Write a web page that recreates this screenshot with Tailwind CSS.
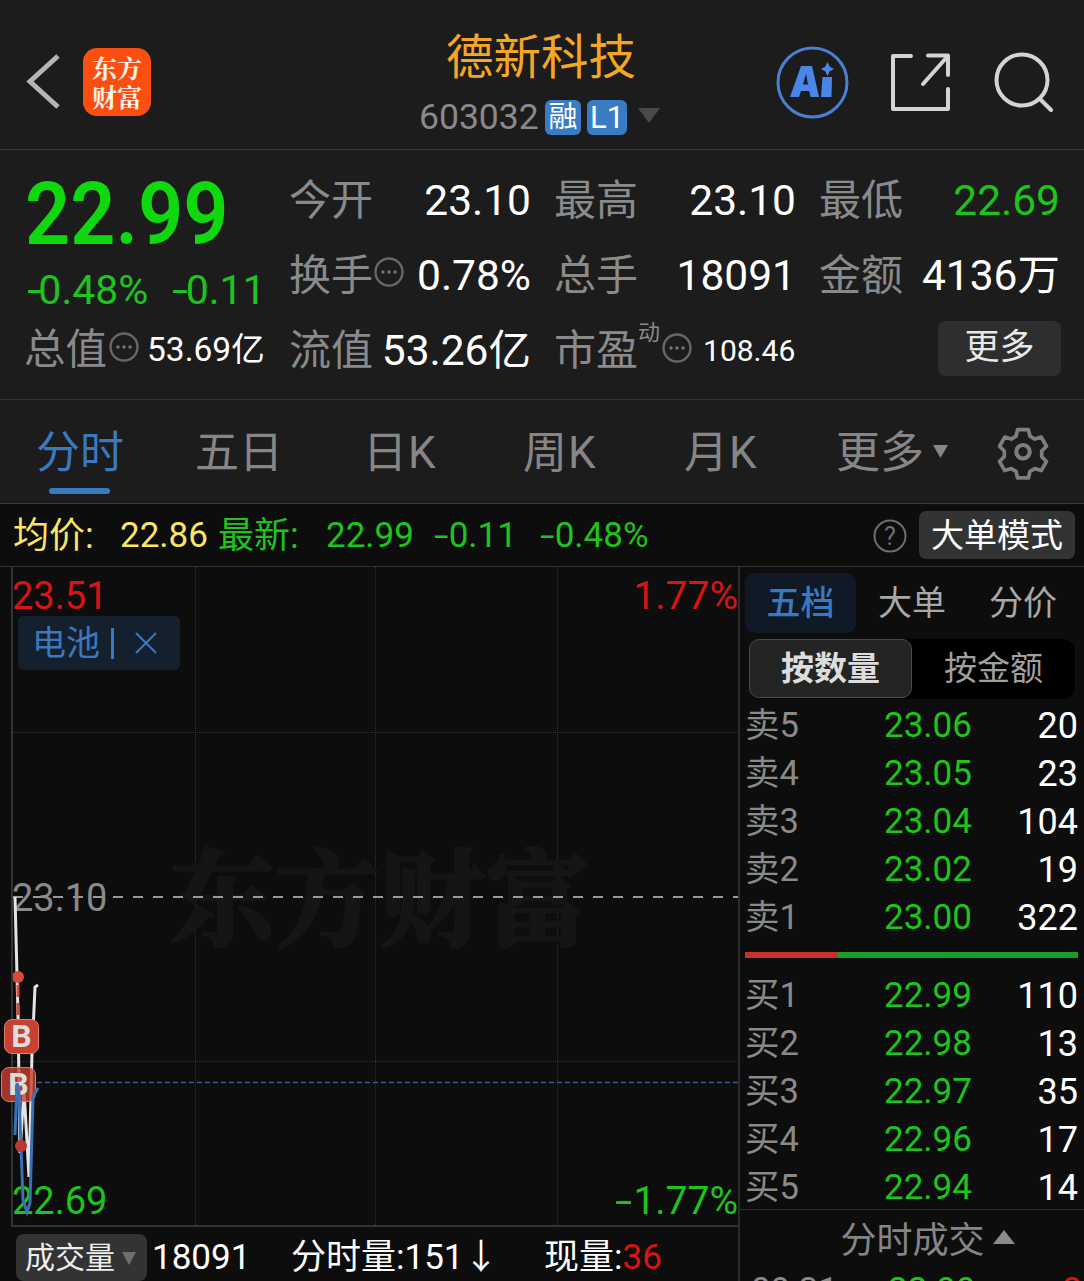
<!DOCTYPE html>
<html lang="zh"><head><meta charset="utf-8">
<script src="https://cdn.jsdelivr.net/npm/@tailwindcss/browser@4"></script>
</head>
<body class="m-0 bg-[#0d0d0d]">
<div class="w-[1084px] h-[1281px] overflow-hidden flex flex-col bg-[#0d0d0d] font-['Roboto','Noto_Sans_CJK_SC',sans-serif] text-white">

<header class="h-[150px] shrink-0 bg-[#1c1c1c] border-b border-[#3a3a3a] relative flex items-center">
  <svg class="ml-[25px] mt-[15px]" width="36" height="56" viewBox="0 0 36 56"><path d="M33 2 L5 27.500 L33 53" fill="none" stroke="#b5b5b5" stroke-width="5"/></svg>
  <div class="ml-[22px] mt-[15px] w-[68px] h-[68px] rounded-[14px] bg-[#fb4f12] flex flex-col items-center justify-center text-[#fff3ea] text-[25px] leading-[29px] font-bold font-['Noto_Serif_CJK_SC','Noto_Sans_CJK_SC',serif]"><span>东方</span><span>财富</span></div>
  <div class="absolute left-[420px] top-[28px] w-[243px] flex flex-col items-center">
    <div class="text-[#f5a623] text-[47.5px] leading-[60px] ml-[-1px]">德新科技</div>
    <div class="flex items-center h-[36px] mt-[11px] self-start">
      <span class="text-[#8a8a8a] text-[35.5px] leading-[36px] w-[125px] -ml-[1px] mr-[1px]">603032</span>
      <span class="w-[36px] h-[35px] rounded-[6px] bg-[#3a7cc4] text-white text-[29px] leading-[35px] text-center">融</span>
      <span class="ml-[6px] w-[40px] h-[35px] rounded-[6px] bg-[#3a7cc4] text-white text-[31px] leading-[35px] text-center">L1</span>
      <svg class="ml-[11px] -mt-[2px]" width="22" height="16" viewBox="0 0 22 16"><path d="M0 0H22L11 15Z" fill="#4a4a4a"/></svg>
    </div>
  </div>
  <svg class="absolute left-[776px] top-[46px]" width="73" height="73" viewBox="0 0 73 73">
    <circle cx="36.500" cy="36.500" r="34.500" fill="none" stroke="#4a80d4" stroke-width="3"/>
    <path d="M14 51 L25 20 H36 L43 51 H34.500 L33.300 45 H25 L23 51Z M27 38.500 H32 L30 27.500Z" fill="#4a86e8" fill-rule="evenodd"/>
    <path d="M46.500 31 H56 L55.500 51 H45Z" fill="#4a86e8"/>
    <path d="M51.500 16 L53.800 20.700 L58 23 L53.800 25.300 L51.500 30 L49.200 25.300 L45 23 L49.200 20.700Z" fill="#4a86e8"/>
  </svg>
  <svg class="absolute left-[890px] top-[52px]" width="62" height="60" viewBox="0 0 62 60" fill="none" stroke="#d4d4d4" stroke-width="4" stroke-linejoin="round" stroke-linecap="round">
    <path d="M21 4 H3 V57 H58 V37"/><path d="M33 32 L57 5"/><path d="M38 3.500 H58 V23"/>
  </svg>
  <svg class="absolute left-[992px] top-[50px]" width="62" height="62" viewBox="0 0 62 62" fill="none" stroke="#d4d4d4" stroke-width="4" stroke-linecap="round">
    <circle cx="30" cy="30" r="25.500"/><path d="M48 49 L59 60"/>
  </svg>
</header>

<section class="h-[250px] shrink-0 bg-[#1c1c1c] border-b border-[#333] relative flex">
  <div class="w-[289px] shrink-0 pl-[25px]">
    <div class="h-[120px] text-[#0fd80f] text-[88px] leading-[128px] font-semibold origin-left scale-x-[.9] whitespace-nowrap">22.99</div>
    <div class="h-[46px] flex text-[#1dc41d] text-[41px] leading-[40px] gap-[24px] pl-[2px]"><span><span class="inline-block origin-left scale-x-[1.4]">-</span>0.48%</span><span><span class="inline-block origin-left scale-x-[1.4] mr-[2px]">-</span>0.11</span></div>
    <div class="h-[68px] flex items-center">
      <span class="text-[#8a8a8a] text-[41.5px] leading-none -ml-[1px]">总值</span>
      <svg class="ml-[2px] -mt-[6px]" width="30" height="30" viewBox="0 0 30 30"><circle cx="15" cy="15" r="13.500" fill="none" stroke="#666" stroke-width="2.400"/><g fill="#777"><circle cx="9" cy="15" r="1.700"/><circle cx="15" cy="15" r="1.700"/><circle cx="21" cy="15" r="1.700"/></g></svg>
      <span class="ml-[8px] text-[33.5px] leading-none whitespace-nowrap">53.69亿</span>
    </div>
  </div>
  <div class="absolute left-[289px] top-[25px] w-[771px] grid grid-cols-[265px_265px_241px] text-[42.5px]">
    <div class="h-[75px] flex justify-between items-start pr-[23px] leading-[52px]"><span class="text-[#8a8a8a] text-[42px]">今开</span><span>23.10</span></div>
    <div class="h-[75px] flex justify-between items-start pr-[23px] leading-[52px]"><span class="text-[#8a8a8a] text-[42px]">最高</span><span>23.10</span></div>
    <div class="h-[75px] flex justify-between items-start leading-[52px]"><span class="text-[#8a8a8a] text-[42px]">最低</span><span class="text-[#1dc41d]">22.69</span></div>

    <div class="h-[75px] flex justify-between items-start pr-[23px] leading-[52px]"><span class="flex items-start text-[#8a8a8a] text-[42px]">换手<svg class="mt-[7px] ml-[1px]" width="30" height="30" viewBox="0 0 30 30"><circle cx="15" cy="15" r="13.500" fill="none" stroke="#666" stroke-width="2.400"/><g fill="#777"><circle cx="9" cy="15" r="1.700"/><circle cx="15" cy="15" r="1.700"/><circle cx="21" cy="15" r="1.700"/></g></svg></span><span>0.78%</span></div>
    <div class="h-[75px] flex justify-between items-start pr-[23px] leading-[52px]"><span class="text-[#8a8a8a] text-[42px]">总手</span><span>18091</span></div>
    <div class="h-[75px] flex justify-between items-start leading-[52px]"><span class="text-[#8a8a8a] text-[42px]">金额</span><span>4136万</span></div>

    <div class="h-[75px] flex justify-between items-start pr-[23px] leading-[52px]"><span class="text-[#8a8a8a] text-[42px]">流值</span><span>53.26亿</span></div>
    <div class="h-[75px] flex items-start leading-[52px]"><span class="text-[#8a8a8a] text-[42px]">市盈</span><span class="text-[#8a8a8a] text-[22px] leading-[22px] -mt-[3px]">动</span><svg class="mt-[8px] ml-[2px]" width="30" height="30" viewBox="0 0 30 30"><circle cx="15" cy="15" r="13.500" fill="none" stroke="#666" stroke-width="2.400"/><g fill="#777"><circle cx="9" cy="15" r="1.700"/><circle cx="15" cy="15" r="1.700"/><circle cx="21" cy="15" r="1.700"/></g></svg><span class="ml-[11px] text-[30px]">108.46</span></div>
    <div class="h-[75px] flex justify-end items-start"><span class="mt-[-4px] mr-[-1px] w-[123px] h-[55px] rounded-[7px] bg-[#2e2e2e] text-[#e8e8e8] text-[35px] leading-[54px] text-center">更多</span></div>
  </div>
</section>

<nav class="h-[104px] shrink-0 bg-[#1c1c1c] border-b border-[#3a3a3a] relative text-[#868686] text-[44px] leading-[52px]">
  <span class="absolute left-[36px] top-[27px] text-[#3a78bf]">分时</span>
  <span class="absolute left-[49px] top-[88px] w-[61px] h-[6px] rounded-full bg-[#3a78bf]"></span>
  <span class="absolute left-[195px] top-[27px]">五日</span>
  <span class="absolute left-[363px] top-[27px] tracking-[1px]">日K</span>
  <span class="absolute left-[523px] top-[27px] tracking-[1px]">周K</span>
  <span class="absolute left-[684px] top-[27px] tracking-[1px]">月K</span>
  <span class="absolute left-[836px] top-[27px]">更多</span>
  <svg class="absolute left-[933px] top-[45px]" width="15" height="13" viewBox="0 0 15 13"><path d="M0 0H15L7.500 13Z" fill="#868686"/></svg>
  <svg class="absolute left-[994px] top-[22px]" width="58" height="58" viewBox="0 0 24 24" fill="none" stroke="#7e7e7e" stroke-width="1.700" stroke-linejoin="round"><path d="M9.500 2.200h5l.7 3 2.200 1.300 3-.9 2.400 4.200-2.200 2.200v2.600l2.200 2.200-2.400 4.200-3-.9-2.200 1.300-.7 3h-5l-.7-3-2.200-1.300-3 .9-2.400-4.200 2.200-2.200v-2.600l-2.200-2.200 2.400-4.200 3 .9 2.200-1.300z" transform="translate(1.200 1.200) scale(.9)"/><circle cx="12" cy="12.300" r="2.800"/></svg>
</nav>

<section class="h-[63px] shrink-0 bg-[#0d0d0d] border-b border-[#333] relative text-[35px] leading-[64px]">
  <span class="absolute left-[13px] top-0 text-[#fbe565] text-[36px]">均价:</span>
  <span class="absolute left-[120px] top-0 text-[#fbe565]">22.86</span>
  <span class="absolute left-[218px] top-0 text-[#1dc41d] text-[36px]">最新:</span>
  <span class="absolute left-[326px] top-0 text-[#1dc41d]">22.99</span>
  <span class="absolute left-[434px] top-0 text-[#1dc41d]"><span class="inline-block origin-left scale-x-[1.5] mr-[5px]">-</span>0.11</span>
  <span class="absolute left-[540px] top-0 text-[#1dc41d]"><span class="inline-block origin-left scale-x-[1.5] mr-[5px]">-</span>0.48%</span>
  <svg class="absolute left-[873px] top-[15px]" width="34" height="34" viewBox="0 0 34 34"><circle cx="17" cy="17" r="15.500" fill="none" stroke="#6e6e6e" stroke-width="2"/><text x="17" y="26" text-anchor="middle" font-size="25" fill="#6e6e6e" font-family="Roboto">?</text></svg>
  <span class="absolute left-[919px] top-[7px] w-[156px] h-[48px] rounded-[7px] bg-[#333] text-[33px] leading-[50px] text-center">大单模式</span>
</section>

<div class="flex-1 flex min-h-0">
  <div class="w-[740px] shrink-0 flex flex-col border-r-2 border-[#2b2b2b]">
    <div class="relative h-[660px] ml-[11px] border-l-2 border-b-2 border-[#333]">
      <!-- grid -->
      <div class="absolute left-[182px] top-0 bottom-0 border-l border-dotted border-[#333]"></div>
      <div class="absolute left-[362px] top-0 bottom-0 border-l border-dotted border-[#333]"></div>
      <div class="absolute left-[544px] top-0 bottom-0 border-l border-dotted border-[#333]"></div>
      <div class="absolute left-0 right-0 top-[165px] border-t border-dotted border-[#333]"></div>
      <div class="absolute left-0 right-0 top-[494px] border-t border-dotted border-[#333]"></div>
      <!-- watermark -->
      <div class="absolute left-[157px] top-[260px] text-[#151515] text-[105px] leading-[130px] font-bold whitespace-nowrap [-webkit-text-stroke:3px_#151515] font-['Noto_Serif_CJK_SC','Noto_Sans_CJK_SC',serif]">东方财富</div>
      <svg class="absolute left-0 top-[328px]" width="725" height="4"><line x1="0" y1="2" x2="725" y2="2" stroke="#9a9a9a" stroke-width="2" stroke-dasharray="10 10"/></svg>
      <svg class="absolute left-0 top-[514px]" width="725" height="3"><line x1="0" y1="1.500" x2="725" y2="1.500" stroke="#2f5f9f" stroke-width="1.500" stroke-dasharray="5 3"/></svg>
      <!-- labels -->
      <span class="absolute left-[-1px] top-[6px] text-[#d81414] text-[38px] leading-[46px]">23.51</span>
      <span class="absolute right-0 top-[6px] text-[#d81414] text-[39px] leading-[46px]">1.77%</span>
      <span class="absolute left-[-1px] top-[308px] text-[#8a8a8a] text-[38px] leading-[46px]">23.10</span>
      <span class="absolute left-[-1px] top-[611px] text-[#1dc41d] text-[38px] leading-[46px]">22.69</span>
      <span class="absolute right-0 top-[611px] text-[#1dc41d] text-[39px] leading-[46px]"><span class="inline-block origin-left scale-x-[1.6] mr-[8px]">-</span>1.77%</span>
      <div class="absolute left-[5px] top-[49px] w-[162px] h-[54px] rounded-[5px] bg-[#14202e] text-[#3a78bf] text-[34px] leading-[44px] flex items-center pl-[14px]">电池<span class="ml-[11px] w-[3px] h-[31px] bg-[#3a78bf]"></span>
        <svg class="ml-[20px]" width="24" height="24" viewBox="0 0 24 24"><path d="M2 2L22 22M22 2L2 22" stroke="#3a78bf" stroke-width="2"/></svg></div>
      <!-- chart -->
      <svg class="absolute left-0 top-0" width="60" height="660" viewBox="0 0 60 660" fill="none">
        <path d="M2 330 L5 448 L7 586 L11 523 L16 610 L19 486 L22 420 L25 418" stroke="#e5e5e5" stroke-width="3"/>
        <path d="M5 418 V448" stroke="#d8493a" stroke-width="3" stroke-dasharray="12 6"/>
        <circle cx="5" cy="410" r="6" fill="#d8493a"/>
      </svg>
      <div class="absolute left-[-9px] top-[452px] w-[35px] h-[35px] rounded-[8px] bg-[#c8402f] border border-[#e07a6c] text-[#ddd] text-[32px] leading-[33px] font-bold text-center">B</div>
      <div class="absolute left-[-12px] top-[500px] w-[35px] h-[35px] rounded-[8px] bg-[#c8402f]/80 border border-[#e07a6c] text-[#ddd] text-[32px] leading-[33px] font-bold text-center">B</div>
      <svg class="absolute left-0 top-0" width="60" height="660" viewBox="0 0 60 660" fill="none">
        <path d="M2 568 L4 516 L6 526 L10 633 L14 645 L17 636 L20 530 L25 521" stroke="#3a70b8" stroke-width="3"/>
        <circle cx="8" cy="579" r="6" fill="#b73a30"/>
      </svg>
    </div>
    <div class="h-[54px] relative text-[35px] leading-[50px]">
      <div class="absolute left-[16px] top-[7px] w-[131px] h-[47px] rounded-[8px] bg-[#333] flex items-center pl-[9px] text-[#eee] text-[30px]">成交量<svg class="ml-[7px] mt-[2px]" width="14" height="13" viewBox="0 0 14 13"><path d="M0 0H14L7 13Z" fill="#6e6e6e"/></svg></div>
      <span class="absolute left-[152px] top-[6px]">18091</span>
      <span class="absolute left-[291px] top-[6px] whitespace-nowrap">分时量:151↓</span>
      <span class="absolute left-[544px] top-[6px] whitespace-nowrap">现量:<span class="text-[#d81414]">36</span></span>
    </div>
  </div>

  <aside class="flex-1 min-w-0 flex flex-col relative text-[34px]">
    <div class="h-[72px] shrink-0 relative text-[#a8a8a8] leading-[46px]">
      <span class="absolute left-[5px] top-[6px] w-[111px] h-[60px] rounded-[10px] bg-[#0f1a26] text-[#3a78bf] font-medium text-center leading-[60px]">五档</span>
      <span class="absolute left-[138px] top-[13px]">大单</span>
      <span class="absolute left-[249px] top-[13px]">分价</span>
    </div>
    <div class="h-[60px] shrink-0 ml-[9px] w-[326px] rounded-[12px] bg-black flex text-[33px]">
      <span class="w-[163px] h-[59px] rounded-[10px] bg-[#242424] border border-[#4a4a4a] text-[#ddd] font-bold text-center leading-[57px]">按数量</span>
      <span class="flex-1 text-[#a0a0a0] text-center leading-[59px]">按金额</span>
    </div>
    <div class="h-[3px] shrink-0"></div>
    <div class="flex flex-col">
      <div class="h-[48px] flex items-center pl-[5px] pr-[6px]"><span class="w-[140px] text-[#8a8a8a] text-[34.5px]">卖5</span><span class="w-[87px] -ml-[1px] text-[#1dc41d] text-[35px]">23.06</span><span class="flex-1 text-right text-[36px]">20</span></div>
      <div class="h-[48px] flex items-center pl-[5px] pr-[6px]"><span class="w-[140px] text-[#8a8a8a] text-[34.5px]">卖4</span><span class="w-[87px] -ml-[1px] text-[#1dc41d] text-[35px]">23.05</span><span class="flex-1 text-right text-[36px]">23</span></div>
      <div class="h-[48px] flex items-center pl-[5px] pr-[6px]"><span class="w-[140px] text-[#8a8a8a] text-[34.5px]">卖3</span><span class="w-[87px] -ml-[1px] text-[#1dc41d] text-[35px]">23.04</span><span class="flex-1 text-right text-[36px]">104</span></div>
      <div class="h-[48px] flex items-center pl-[5px] pr-[6px]"><span class="w-[140px] text-[#8a8a8a] text-[34.5px]">卖2</span><span class="w-[87px] -ml-[1px] text-[#1dc41d] text-[35px]">23.02</span><span class="flex-1 text-right text-[36px]">19</span></div>
      <div class="h-[48px] flex items-center pl-[5px] pr-[6px]"><span class="w-[140px] text-[#8a8a8a] text-[34.5px]">卖1</span><span class="w-[87px] -ml-[1px] text-[#1dc41d] text-[35px]">23.00</span><span class="flex-1 text-right text-[36px]">322</span></div>
    </div>
    <div class="h-[30px] shrink-0 flex items-center pl-[5px] pr-[6px] pb-[4px]"><div class="h-[6px] w-[93px] bg-[#c8322c]"></div><div class="h-[6px] flex-1 bg-[#1d9c2a]"></div></div>
    <div class="flex flex-col">
      <div class="h-[48px] flex items-center pl-[5px] pr-[6px]"><span class="w-[140px] text-[#8a8a8a] text-[34.5px]">买1</span><span class="w-[87px] -ml-[1px] text-[#1dc41d] text-[35px]">22.99</span><span class="flex-1 text-right text-[36px]">110</span></div>
      <div class="h-[48px] flex items-center pl-[5px] pr-[6px]"><span class="w-[140px] text-[#8a8a8a] text-[34.5px]">买2</span><span class="w-[87px] -ml-[1px] text-[#1dc41d] text-[35px]">22.98</span><span class="flex-1 text-right text-[36px]">13</span></div>
      <div class="h-[48px] flex items-center pl-[5px] pr-[6px]"><span class="w-[140px] text-[#8a8a8a] text-[34.5px]">买3</span><span class="w-[87px] -ml-[1px] text-[#1dc41d] text-[35px]">22.97</span><span class="flex-1 text-right text-[36px]">35</span></div>
      <div class="h-[48px] flex items-center pl-[5px] pr-[6px]"><span class="w-[140px] text-[#8a8a8a] text-[34.5px]">买4</span><span class="w-[87px] -ml-[1px] text-[#1dc41d] text-[35px]">22.96</span><span class="flex-1 text-right text-[36px]">17</span></div>
      <div class="h-[48px] flex items-center pl-[5px] pr-[6px]"><span class="w-[140px] text-[#8a8a8a] text-[34.5px]">买5</span><span class="w-[87px] -ml-[1px] text-[#1dc41d] text-[35px]">22.94</span><span class="flex-1 text-right text-[36px]">14</span></div>
    </div>
    <div class="h-[62px] shrink-0 border-t border-[#2b2b2b] -mt-[3px] flex items-center justify-center text-[#858585] text-[36px] pl-[31px]">分时成交<svg class="ml-[8px] -mt-[7px]" width="22" height="14" viewBox="0 0 22 14"><path d="M0 14H22L11 0Z" fill="#8a8a8a"/></svg></div>
    <div class="relative h-[20px] overflow-hidden text-[35px] leading-[40px]"><span class="absolute left-[11px] top-0 text-[#8a8a8a]">09:31</span><span class="absolute left-[148px] top-0 text-[#1dc41d]">22.99</span><span class="absolute left-[322px] top-0 text-[#d81414]">8</span></div>
  </aside>
</div>
</div>
</body></html>
